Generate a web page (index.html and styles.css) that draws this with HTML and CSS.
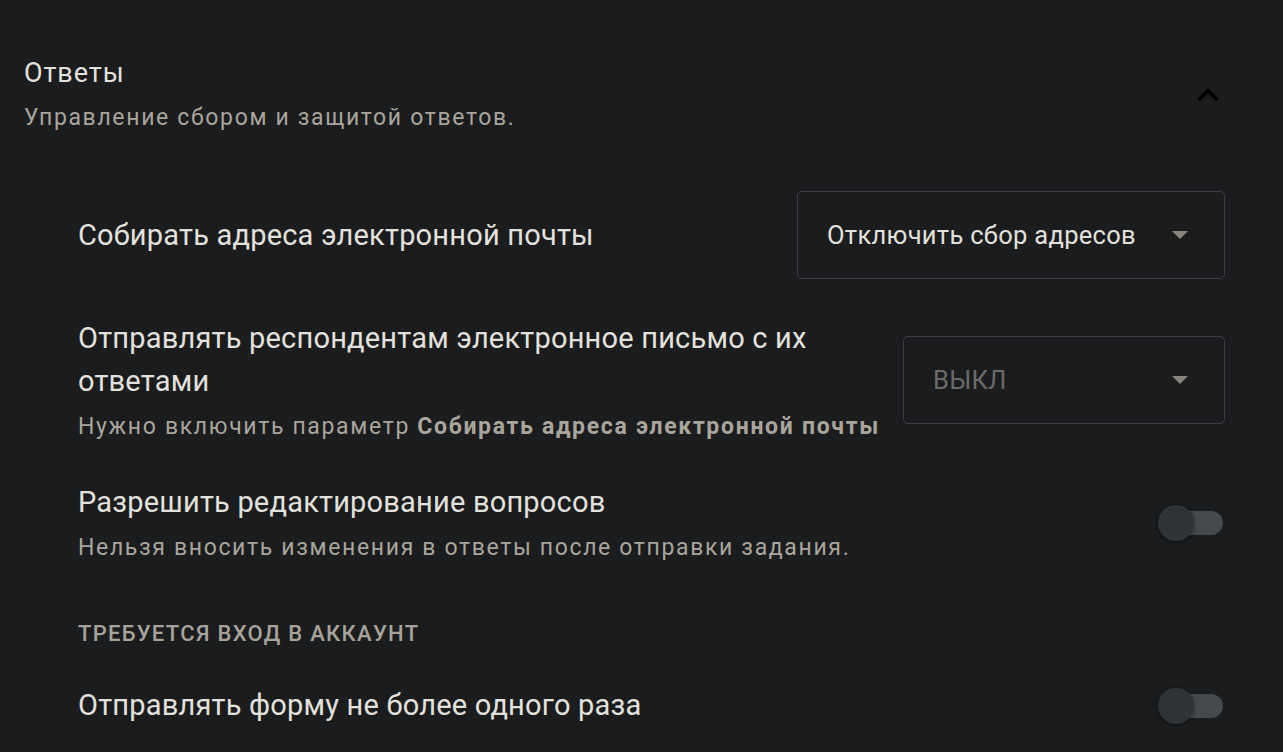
FILE: index.html
```html
<!DOCTYPE html>
<html lang="ru">
<head>
  <meta charset="UTF-8">
  <meta name="viewport" content="width=device-width, initial-scale=1.0">
  <title>Ответы</title>
  <link rel="stylesheet" href="styles.css">
</head>
<body>
  <div class="section">
    <div class="section-head">
      <div>
        <h2>Ответы</h2>
        <p class="section-sub">Управление сбором и защитой ответов.</p>
      </div>
      <button class="collapse" aria-label="Свернуть">
        <svg width="42" height="42" viewBox="0 0 24 24"><path d="M12 8l-6 6 1.41 1.41L12 10.83l4.59 4.58L18 14z" fill="#000"/></svg>
      </button>
    </div>

    <div class="rows">
      <div class="row row-email">
        <div class="row-text">
          <div class="row-label">Собирать адреса электронной почты</div>
        </div>
        <div class="select select-wide">
          <span>Отключить сбор адресов</span>
          <span class="caret"></span>
        </div>
      </div>

      <div class="row">
        <div class="row-text">
          <div class="row-label">Отправлять респондентам электронное письмо с их ответами</div>
          <div class="row-hint">Нужно включить параметр <b>Собирать адреса электронной почты</b></div>
        </div>
        <div class="select select-narrow disabled">
          <span>ВЫКЛ</span>
          <span class="caret"></span>
        </div>
      </div>

      <div class="row">
        <div class="row-text">
          <div class="row-label">Разрешить редактирование вопросов</div>
          <div class="row-hint">Нельзя вносить изменения в ответы после отправки задания.</div>
        </div>
        <div class="switch"><span class="thumb"></span></div>
      </div>

      <div class="group-title">Требуется вход в аккаунт</div>

      <div class="row row-once">
        <div class="row-text">
          <div class="row-label">Отправлять форму не более одного раза</div>
        </div>
        <div class="switch"><span class="thumb"></span></div>
      </div>
    </div>
  </div>
</body>
</html>
```

FILE: styles.css
```css
body {
  font-family: Roboto, "Noto Sans", sans-serif;
  margin: 0;
  background-color: #1b1c1e;
  color: #e2e0db;
  overflow: hidden;
}
.section {
  padding: 55px 58px 0 24px;
}
.section-head {
  display: flex;
  justify-content: space-between;
  align-items: center;
}
h2 {
  margin: 0;
  font-size: 27px;
  font-weight: 400;
  line-height: 36px;
  letter-spacing: 0.9px;
  color: #e3e1dd;
}
.section-sub {
  margin: 11px 0 0;
  font-size: 23px;
  line-height: 32px;
  letter-spacing: 1.65px;
  color: #aaa59b;
}
.collapse {
  background: none;
  border: none;
  padding: 0;
  margin-right: -4px;
  width: 42px;
  height: 42px;
  cursor: pointer;
}
.collapse svg {
  display: block;
}
.rows {
  padding-left: 54px;
  margin-top: 57px;
}
.row {
  display: flex;
  align-items: center;
  justify-content: space-between;
  gap: 20px;
  margin-top: 38px;
}
.row-email {
  margin-top: 0;
}
.row-label {
  font-size: 29px;
  line-height: 43px;
  letter-spacing: 0.2px;
  color: #e3e1dc;
}
.row-hint {
  margin-top: 8px;
  font-size: 23px;
  line-height: 32px;
  letter-spacing: 1.65px;
  white-space: nowrap;
  color: #aaa59b;
}
.row-hint b {
  font-weight: 700;
  letter-spacing: 1.7px;
}
.row-once {
  margin-top: 34px;
}
.select {
  flex: none;
  box-sizing: border-box;
  height: 88px;
  border: 1px solid #3d3e41;
  border-radius: 5px;
  display: flex;
  align-items: center;
  justify-content: space-between;
  padding: 0 36px 0 29px;
  font-size: 25.5px;
  letter-spacing: 0.3px;
  color: #e3e1dc;
}
.select-wide {
  width: 428px;
}
.select-narrow {
  width: 322px;
}
.select.disabled {
  color: #6b6b6b;
}
.caret {
  width: 0;
  height: 0;
  border-left: 8px solid transparent;
  border-right: 8px solid transparent;
  border-top: 8px solid #8a857b;
}
.switch {
  flex: none;
  position: relative;
  width: 60px;
  height: 24px;
  margin-right: 2px;
  border-radius: 12px;
  background: #45494b;
}
.thumb {
  position: absolute;
  left: -5px;
  top: -6px;
  width: 36px;
  height: 36px;
  border-radius: 50%;
  background: #2f3335;
  box-shadow: 0 1px 4px rgba(0,0,0,0.45);
}
.group-title {
  margin-top: 54px;
  font-size: 22px;
  line-height: 32px;
  font-weight: 500;
  letter-spacing: 1.3px;
  text-transform: uppercase;
  color: #a8a399;
}
```
